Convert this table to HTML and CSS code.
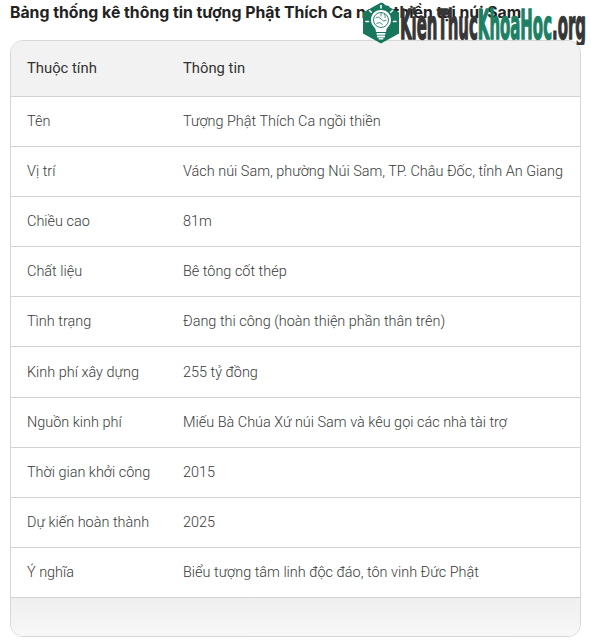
FILE: index.html
```html
<!DOCTYPE html>
<html lang="vi">
<head>
<meta charset="utf-8">
<link rel="stylesheet" href="styles.css">
</head>
<body>
<div class="page">
  <h1 class="title">Bảng thống kê thông tin tượng Phật Thích Ca ngồi thiền tại núi Sam</h1>
  <div class="logo">
    <svg class="logo-icon" viewBox="0 0 40 42" width="40" height="42">
      <polygon points="20,0.5 38,10.5 38,31.5 20,41.5 2,31.5 2,10.5" fill="#17775d"/>
      <g stroke="#fff" stroke-width="1.6" stroke-linecap="round">
        <line x1="20" y1="3.5" x2="20" y2="6"/>
        <line x1="8.5" y1="8.5" x2="10.3" y2="10.3"/>
        <line x1="31.5" y1="8.5" x2="29.7" y2="10.3"/>
        <line x1="5" y1="19.5" x2="7.5" y2="19.5"/>
        <line x1="35" y1="19.5" x2="32.5" y2="19.5"/>
      </g>
      <path d="M20 8 C13.5 8 10 12.5 10 18 C10 22 12.5 24.5 14.5 27 L15 30 L25 30 L25.5 27 C27.5 24.5 30 22 30 18 C30 12.5 26.5 8 20 8 Z" fill="#fff"/>
      <circle cx="20" cy="18" r="7.5" fill="none" stroke="#17775d" stroke-width="0.9"/>
      <g fill="none" stroke="#17775d" stroke-width="0.8">
        <path d="M14.5 16 Q17.5 13.5 20 17 Q22.5 20.5 25.5 18"/>
        <path d="M15.5 21.5 Q19 19 21.5 22.5"/>
        <path d="M20 10.5 L20 14.5"/>
        <path d="M23 12 Q25 14 24 16"/>
      </g>
      <rect x="15.5" y="31" width="9" height="1.8" rx="0.6" fill="#fff"/>
      <rect x="16" y="33.6" width="8" height="1.8" rx="0.6" fill="#fff"/>
      <rect x="17.5" y="36" width="5" height="1.5" rx="0.7" fill="#fff"/>
    </svg>
    <svg class="logo-word" viewBox="0 0 190 44" width="190" height="44">
      <text x="1" y="38" textLength="186" lengthAdjust="spacingAndGlyphs" class="word"><tspan class="dark">KienThuc</tspan><tspan class="green">KhoaHoc</tspan><tspan class="dark">.org</tspan></text>
    </svg>
  </div>
  <div class="table">
    <div class="row head"><div class="c1">Thuộc tính</div><div class="c2">Thông tin</div></div>
    <div class="row"><div class="c1">Tên</div><div class="c2">Tượng Phật Thích Ca ngồi thiền</div></div>
    <div class="row"><div class="c1">Vị trí</div><div class="c2">Vách núi Sam, phường Núi Sam, TP. Châu Đốc, tỉnh An Giang</div></div>
    <div class="row"><div class="c1">Chiều cao</div><div class="c2">81m</div></div>
    <div class="row"><div class="c1">Chất liệu</div><div class="c2">Bê tông cốt thép</div></div>
    <div class="row"><div class="c1">Tình trạng</div><div class="c2">Đang thi công (hoàn thiện phần thân trên)</div></div>
    <div class="row"><div class="c1">Kinh phí xây dựng</div><div class="c2">255 tỷ đồng</div></div>
    <div class="row"><div class="c1">Nguồn kinh phí</div><div class="c2">Miếu Bà Chúa Xứ núi Sam và kêu gọi các nhà tài trợ</div></div>
    <div class="row"><div class="c1">Thời gian khởi công</div><div class="c2">2015</div></div>
    <div class="row"><div class="c1">Dự kiến hoàn thành</div><div class="c2">2025</div></div>
    <div class="row"><div class="c1">Ý nghĩa</div><div class="c2">Biểu tượng tâm linh độc đáo, tôn vinh Đức Phật</div></div>
    <div class="foot"></div>
  </div>
</div>
</body>
</html>
```

FILE: styles.css
```css
html, body {
  margin: 0;
  padding: 0;
  background: #fff;
}
body {
  font-family: Roboto, "Noto Sans", sans-serif;
  color: #333;
}
.page {
  position: relative;
  width: 591px;
  height: 644px;
  padding: 0 10px 0 10px;
  box-sizing: border-box;
}
.title {
  margin: 0;
  padding-top: 3px;
  height: 40px;
  box-sizing: border-box;
  font-family: Inter, "Noto Sans", sans-serif;
  font-size: 15.8px;
  line-height: 20px;
  font-weight: 700;
  color: #222;
  white-space: nowrap;
}
.logo {
  position: absolute;
  left: 361px;
  top: 2px;
  display: flex;
  align-items: flex-start;
}
.logo-icon {
  display: block;
}
.logo-word {
  display: block;
  margin-left: -2px;
  margin-top: -1px;
}
.word {
  font-family: "DejaVu Sans Condensed", "DejaVu Sans", sans-serif;
  font-weight: 700;
  font-size: 40px;
  stroke-width: 1.4px;
  stroke-linejoin: round;
}
.word .dark { fill: #363636; stroke: #363636; }
.word .green { fill: #1c8063; stroke: #1c8063; }
.table {
  border: 1px solid #d6d6d6;
  border-radius: 13px;
  overflow: hidden;
}
.row {
  display: flex;
  align-items: center;
  height: 50.2px;
  box-sizing: border-box;
  border-top: 1px solid #d2d2d2;
  font-size: 14.45px;
  font-weight: 300;
  color: #3a3a3a;
}
.row.head {
  border-top: none;
  height: 54.5px;
  background: #f2f2f2;
  font-size: 14.8px;
  font-weight: 400;
  color: #333;
}
.c1 {
  width: 172px;
  padding-left: 16px;
  flex: none;
  box-sizing: border-box;
}
.c2 {
  flex: 1;
}
.foot {
  height: 38px;
  border-top: 1px solid #d2d2d2;
  background: linear-gradient(#efefef, #f8f8f8);
}
```
